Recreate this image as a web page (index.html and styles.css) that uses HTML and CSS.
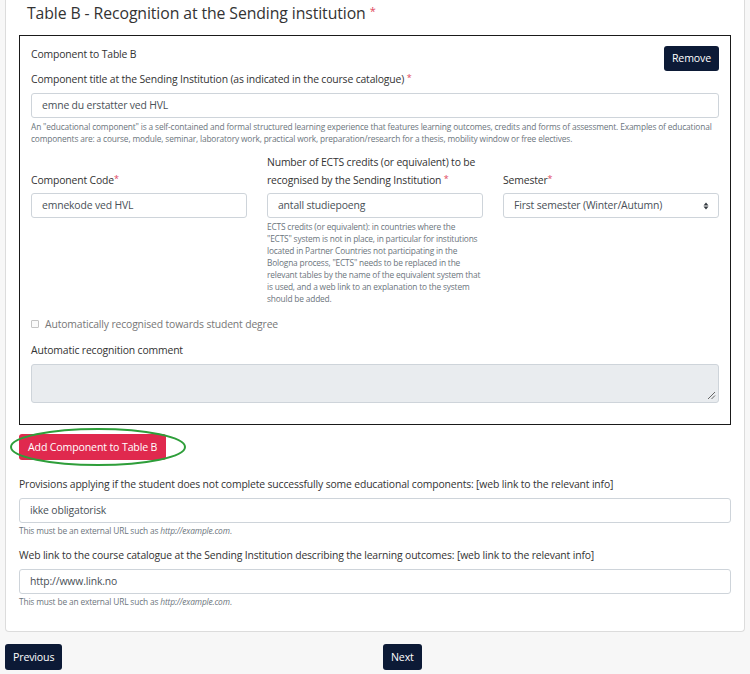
FILE: index.html
```html
<!DOCTYPE html>
<html lang="en">
<head>
<meta charset="utf-8">
<title>Table B</title>
<link rel="stylesheet" href="styles.css">
</head>
<body>
<div class="page">
  <div class="card">
    <h2 class="title">Table B - Recognition at the Sending institution <span class="req">*</span></h2>

    <div class="component">
      <div class="comp-head">
        <span class="comp-name">Component to Table B</span>
        <button class="btn btn-dark">Remove</button>
      </div>
      <label class="lbl lbl-tight">Component title at the Sending Institution (as indicated in the course catalogue) <span class="req">*</span></label>
      <div class="input">emne du erstatter ved HVL</div>
      <div class="help">An "educational component" is a self-contained and formal structured learning experience that features learning outcomes, credits and forms of assessment. Examples of educational components are: a course, module, seminar, laboratory work, practical work, preparation/research for a thesis, mobility window or free electives.</div>

      <div class="cols">
        <div class="col">
          <label class="lbl lbl-bottom"><span>Component Code<span class="req">*</span></span></label>
          <div class="input">emnekode ved HVL</div>
        </div>
        <div class="col">
          <label class="lbl lbl-bottom lbl-two">Number of ECTS credits (or equivalent) to be recognised by the Sending Institution <span class="req">*</span></label>
          <div class="input">antall studiepoeng</div>
          <div class="help help-ects">ECTS credits (or equivalent): in countries where the<br>"ECTS" system is not in place, in particular for institutions<br>located in Partner Countries not participating in the<br>Bologna process, "ECTS" needs to be replaced in the<br>relevant tables by the name of the equivalent system that<br>is used, and a web link to an explanation to the system<br>should be added.</div>
        </div>
        <div class="col">
          <label class="lbl lbl-bottom"><span>Semester<span class="req">*</span></span></label>
          <div class="input select">
            <span>First semester (Winter/Autumn)</span>
            <svg class="caret" width="8" height="10" viewBox="0 0 8 10"><path d="M4 1.5 L6.5 4.5 H1.5 Z M4 8.5 L1.5 5.5 H6.5 Z" fill="#343a40"/></svg>
          </div>
        </div>
      </div>

      <div class="check">
        <span class="box"></span>
        <span>Automatically recognised towards student degree</span>
      </div>
      <label class="lbl lbl-comment">Automatic recognition comment</label>
      <div class="textarea">
        <svg class="grip" width="9" height="9" viewBox="0 0 9 9"><path d="M8 1 L1 8 M8 4.5 L4.5 8" stroke="#666" stroke-width="1"/></svg>
      </div>
    </div>

    <div class="add-wrap">
      <button class="btn btn-red">Add Component to Table B</button>
      <svg class="ring" width="180" height="40" viewBox="0 0 180 40"><ellipse cx="89" cy="20" rx="87" ry="18" fill="none" stroke="#2e9e3a" stroke-width="2"/></svg>
    </div>

    <label class="lbl lbl-field">Provisions applying if the student does not complete successfully some educational components: [web link to the relevant info]</label>
    <div class="input">ikke obligatorisk</div>
    <div class="help help-url">This must be an external URL such as <em>http://example.com</em>.</div>

    <label class="lbl lbl-field2">Web link to the course catalogue at the Sending Institution describing the learning outcomes: [web link to the relevant info]</label>
    <div class="input">http://www.link.no</div>
    <div class="help help-url">This must be an external URL such as <em>http://example.com</em>.</div>
  </div>

  <div class="nav">
    <div><button class="btn btn-dark btn-nav">Previous</button></div>
    <div><button class="btn btn-dark btn-nav">Next</button></div>
  </div>
</div>
</body>
</html>
```

FILE: styles.css
```css
* { box-sizing: border-box; }
html, body {
  margin: 0;
  padding: 0;
  background: #f7f7f7;
  font-family: "Open Sans", "Noto Sans", sans-serif;
  font-size: 10.4px;
  letter-spacing: -0.15px;
  color: #333;
}
.page {
  padding: 0 5px 0 5px;
  width: 750px;
}
.card {
  background: #fff;
  border: 1px solid #dcdcdc;
  border-top: none;
  border-radius: 0 0 4px 4px;
  padding: 1px 13px 23px 13px;
}
.title {
  margin: 0;
  padding-left: 8px;
  font-size: 15.8px;
  font-weight: 400;
  line-height: 24px;
  letter-spacing: -0.1px;
  color: #333;
}
.title .req { font-size: 11px; vertical-align: 4px; }
.req { color: #e0465e; font-size: 9px; line-height: 10px; vertical-align: 2px; }
.component {
  margin-top: 10px;
  border: 1px solid #1a1a1a;
  padding: 10px 11px 21px 11px;
}
.comp-head {
  display: flex;
  justify-content: space-between;
  align-items: flex-start;
  height: 25px;
}
.comp-name { line-height: 18px; margin-top: -1px; }
.btn {
  font-family: inherit;
  font-size: 10.6px;
  letter-spacing: -0.15px;
  border: none;
  border-radius: 3px;
  color: #fff;
  padding: 0 8px;
  height: 25px;
  line-height: 25px;
  cursor: pointer;
}
.btn-dark { background: #0c1a36; }
.btn-red { background: #e0294e; height: 26px; padding: 0 9px; }
.lbl { display: block; line-height: 18px; }
.lbl-tight { line-height: 16px; margin-bottom: 6px; }
.input {
  height: 25px;
  border: 1px solid #ced4da;
  border-radius: 3px;
  padding: 0 10px;
  line-height: 23px;
  color: #495057;
  background: #fff;
}
.help {
  font-size: 8.36px;
  letter-spacing: -0.15px;
  line-height: 12px;
  color: #6c757d;
  margin-top: 3px;
}
.help-ects { white-space: nowrap; letter-spacing: -0.18px; }
.cols {
  display: grid;
  grid-template-columns: 1fr 1fr 1fr;
  column-gap: 20px;
  margin-top: 8px;
}
.lbl-bottom {
  height: 40px;
  display: flex;
  align-items: flex-end;
  padding-bottom: 4px;
}
.lbl-two { display: block; }
.select {
  display: flex;
  justify-content: space-between;
  align-items: center;
  padding-right: 8px;
}
.check {
  display: flex;
  align-items: center;
  gap: 6px;
  margin-top: 10px;
  line-height: 18px;
  color: #777;
}
.check .box {
  width: 8px;
  height: 8px;
  border: 1px solid #c4c4c4;
  border-radius: 1px;
  background: #fafafa;
}
.lbl-comment { margin-top: 8px; margin-bottom: 5px; }
.textarea {
  height: 39px;
  border: 1px solid #ced4da;
  border-radius: 3px;
  background: #e9ecef;
  display: flex;
  justify-content: flex-end;
  align-items: flex-end;
  padding: 2px;
}
.add-wrap {
  position: relative;
  margin-top: 9px;
  height: 26px;
}
.ring {
  position: absolute;
  left: -10px;
  top: -7px;
}
.lbl-field { margin-top: 15px; margin-bottom: 5px; }
.lbl-field2 { margin-top: 9px; margin-bottom: 5px; }
.help-url { margin-top: 2px; }
.help em { font-style: italic; }
.nav {
  display: grid;
  grid-template-columns: 378px 1fr;
  margin-top: 12px;
}
.btn-nav { height: 26px; line-height: 26px; }
```
